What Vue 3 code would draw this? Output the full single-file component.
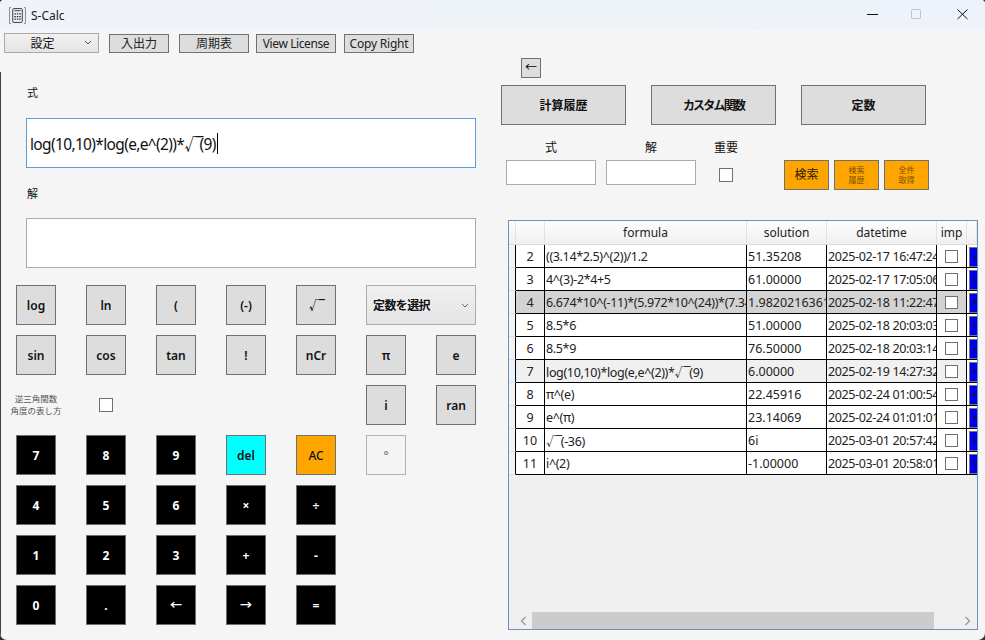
<script setup>
const keys = [
  { t: 'log' }, { t: 'ln' }, { t: '(' }, { t: '(-)' }, { t: '√¯', cls: 'rootkey' },
  { select: true },
  { t: 'sin', cls: 'c1' }, { t: 'cos' }, { t: 'tan' }, { t: '!' }, { t: 'nCr' }, { t: 'π' }, { t: 'e' },
  { note: true },
  { check: true },
  { t: 'i', cls: 'c6' }, { t: 'ran' },
  { t: '7', cls: 'c1 dark' }, { t: '8', cls: 'dark' }, { t: '9', cls: 'dark' }, { t: 'del', cls: 'cyan' }, { t: 'AC', cls: 'orange' }, { t: '°', cls: 'c6 off' },
  { t: '4', cls: 'c1 dark' }, { t: '5', cls: 'dark' }, { t: '6', cls: 'dark' }, { t: '×', cls: 'dark' }, { t: '÷', cls: 'dark' },
  { t: '1', cls: 'c1 dark' }, { t: '2', cls: 'dark' }, { t: '3', cls: 'dark' }, { t: '+', cls: 'dark' }, { t: '-', cls: 'dark' },
  { t: '0', cls: 'c1 dark' }, { t: '.', cls: 'dark' }, { t: '←', cls: 'dark' }, { t: '→', cls: 'dark' }, { t: '=', cls: 'dark' },
]
const rows = [
  { id: 2, f: '((3.14*2.5)^(2))/1.2', s: '51.35208', d: '2025-02-17 16:47:24' },
  { id: 3, f: '4^(3)-2*4+5', s: '61.00000', d: '2025-02-17 17:05:06' },
  { id: 4, f: '6.674*10^(-11)*(5.972*10^(24))*(7.348', s: '1.98202163610', d: '2025-02-18 11:22:47', cls: 'sel' },
  { id: 5, f: '8.5*6', s: '51.00000', d: '2025-02-18 20:03:03' },
  { id: 6, f: '8.5*9', s: '76.50000', d: '2025-02-18 20:03:14' },
  { id: 7, f: 'log(10,10)*log(e,e^(2))*√¯(9)', s: '6.00000', d: '2025-02-19 14:27:32', cls: 'cur' },
  { id: 8, f: 'π^(e)', s: '22.45916', d: '2025-02-24 01:00:54' },
  { id: 9, f: 'e^(π)', s: '23.14069', d: '2025-02-24 01:01:01' },
  { id: 10, f: '√¯(-36)', s: '6i', d: '2025-03-01 20:57:42' },
  { id: 11, f: 'i^(2)', s: '-1.00000', d: '2025-03-01 20:58:01' },
]
</script>

<template>
  <div class="window">
    <header class="titlebar">
      <svg class="appicon" viewBox="0 0 16 16" width="17" height="17" fill="none" stroke="#333" stroke-width=".9">
        <path d="M2 .5H.5v15H2M14 .5h1.5v15H14" stroke="#888" />
        <rect x="3.5" y="1.5" width="9" height="13" rx="1" />
        <path d="M5 3.5h6" />
        <path d="M5 6.5h1.5M7.3 6.5h1.5M9.6 6.5h1.5M5 9h1.5M7.3 9h1.5M9.6 9h1.5M5 11.5h1.5M7.3 11.5h1.5M9.6 11.5h1.5" stroke-width="1.2" />
      </svg>
      <span class="title">S-Calc</span>
      <div class="controls">
        <svg width="45" height="30" viewBox="0 0 45 30"><path d="M17 14.5h11" stroke="#111" /></svg>
        <svg width="45" height="30" viewBox="0 0 45 30"><rect x="16.5" y="9.5" width="9" height="9" rx="1" fill="none" stroke="#c4c4c4" /></svg>
        <svg width="45" height="30" viewBox="0 0 45 30"><path d="M17.5 9.5l10 9.5M27.5 9.5l-10 9.5" stroke="#111" /></svg>
      </div>
    </header>

    <nav class="menu">
      <div class="combo">
        <span>設定</span>
        <svg class="chev" width="8" height="5" viewBox="0 0 8 5"><path d="M1 1l3 3 3-3" fill="none" stroke="#555" /></svg>
      </div>
      <button class="mbtn w60">入出力</button>
      <button class="mbtn w70">周期表</button>
      <button class="mbtn w80">View License</button>
      <button class="mbtn w70b">Copy Right</button>
    </nav>

    <main class="main">
      <section class="left">
        <div class="field-label">式</div>
        <div class="textbox focus"><span>log(10,10)*log(e,e^(2))*<span class="root big">√¯</span>(9)</span><i class="caret"></i></div>
        <div class="field-label second">解</div>
        <div class="textbox"></div>

        <div class="pad">
          <template v-for="(k, n) in keys" :key="n">
            <div v-if="k.select" class="constsel">
              <span>定数を選択</span>
              <svg width="8" height="5" viewBox="0 0 8 5"><path d="M1 1l3 3 3-3" fill="none" stroke="#666" /></svg>
            </div>
            <div v-else-if="k.note" class="note">逆三角関数<br>角度の表し方</div>
            <div v-else-if="k.check" class="notecheck"><input type="checkbox" class="cb" /></div>
            <button v-else class="key" :class="k.cls">{{ k.t }}</button>
          </template>
        </div>
      </section>

      <section class="right">
        <button class="back">←</button>
        <div class="tabs">
          <button class="tab">計算履歴</button>
          <button class="tab kana">カスタム関数</button>
          <button class="tab">定数</button>
        </div>
        <div class="search">
          <label class="sf"><span>式</span><input class="sinput" /></label>
          <label class="sf"><span>解</span><input class="sinput" /></label>
          <label class="sf imp"><span>重要</span><input type="checkbox" class="cb" /></label>
          <div class="actions">
            <button class="act big">検索</button>
            <button class="act">検索<br>履歴</button>
            <button class="act">全件<br>取得</button>
          </div>
        </div>

        <div class="gridbox">
          <div class="tablewrap">
            <table class="tbl">
              <colgroup>
                <col class="c-strip" /><col class="c-id" /><col class="c-f" /><col class="c-s" /><col class="c-d" /><col class="c-i" /><col class="c-b" />
              </colgroup>
              <thead>
                <tr>
                  <th></th><th></th><th>formula</th><th>solution</th><th>datetime</th><th>imp</th><th></th>
                </tr>
              </thead>
              <tbody>
                <tr v-for="r in rows" :key="r.id" :class="r.cls">
                  <td class="strip"></td>
                  <td class="id">{{ r.id }}</td>
                  <td class="formula"><template v-for="(p, i) in r.f.split('√¯')" :key="i"><span v-if="i" class="root">√¯</span>{{ p }}</template></td>
                  <td>{{ r.s }}</td>
                  <td class="date">{{ r.d }}</td>
                  <td class="chk"><input type="checkbox" class="cb small" /></td>
                  <td class="blue">
                    <span class="bluebtn"><svg width="4" height="5" viewBox="0 0 4 5"><path d="M0 1l2 2.5L4 1" fill="none" stroke="#112" stroke-width="1.2" /></svg></span>
                  </td>
                </tr>
              </tbody>
            </table>
          </div>
          <div class="hscroll">
            <svg width="7" height="10" viewBox="0 0 7 10"><path d="M5.5 1L1.5 5l4 4" fill="none" stroke="#999" stroke-width="1.3" /></svg>
            <div class="thumb"></div>
            <svg width="7" height="10" viewBox="0 0 7 10"><path d="M1.5 1l4 4-4 4" fill="none" stroke="#999" stroke-width="1.3" /></svg>
          </div>
        </div>
      </section>
    </main>
  </div>
</template>

<style>
html, body { margin: 0; background: #333; }
</style>

<style scoped>
* { box-sizing: border-box; }
.window {
  width: 985px; height: 640px; overflow: hidden; background: #f5f5f5; color: #111; position: relative;
  border-radius: 4px 4px 7px 7px;
  font-family: "Noto Sans", "Noto Sans CJK JP", sans-serif; font-size: 12px;
  display: flex; flex-direction: column;
}
.window::before { content: ""; position: absolute; left: 0; top: 72px; bottom: 0; width: 1px; background: #444; }
button { font-family: inherit; padding: 0; margin: 0; cursor: default; }

.titlebar { height: 30px; flex: none; display: flex; align-items: center; padding-left: 9px; background: linear-gradient(90deg, #eff3f9, #eef3f8 70%, #eef2fb); }
.appicon { flex: none; }
.title { margin-left: 5px; font-size: 12px; color: #1a1a1a; }
.controls { margin-left: auto; display: flex; }
.controls svg { display: block; }

.menu { height: 24px; flex: none; display: flex; align-items: center; padding: 2px 0 0 4px; }
.combo { width: 95px; height: 20px; border: 1px solid #a9a9a9; background: linear-gradient(#f1f1f1, #e4e4e4); display: flex; align-items: center; justify-content: center; padding-right: 18px; font-size: 12px; position: relative; }
.chev { position: absolute; right: 6px; top: 6px; }
.mbtn { height: 19px; background: #dddddd; border: 1px solid #707070; font-size: 12px; line-height: 15px; color: #222; }
.w60 { width: 60px; margin-left: 10px; }
.w70 { width: 70px; margin-left: 10px; }
.w80 { width: 80px; margin-left: 7px; letter-spacing: -0.4px; }
.w70b { width: 70px; margin-left: 8px; letter-spacing: -0.2px; }

.main { flex: 1; display: flex; min-height: 0; }
.left { width: 501px; flex: none; padding: 29px 0 0 16px; }
.field-label { margin-left: 11px; height: 20px; line-height: 20px; font-size: 11px; }
.field-label.second { margin-top: 16px; }
.textbox { margin: 15px 0 0 10px; width: 450px; height: 50px; background: #fff; border: 1px solid #ababab; display: flex; align-items: center; padding-left: 3px; font-size: 15.5px; letter-spacing: -0.65px; }
.second + .textbox { margin-top: 14px; }
.textbox.focus { border-color: #5a9de0; }
.caret { width: 1px; height: 21px; background: #000; margin-left: 1px; }
.root { letter-spacing: -2.5px; margin-right: 1px; }
.root.big { letter-spacing: -4px; margin-right: 0; }

.pad { margin-top: 17px; display: grid; grid-template-columns: repeat(7, 40px); grid-auto-rows: 40px; column-gap: 30px; row-gap: 10px; }
.c1 { grid-column: 1; }
.c6 { grid-column: 6; }
.key { width: 40px; height: 40px; background: #dddddd; border: 1px solid #707070; font-size: 12px; font-weight: 600; color: #111; }
.key.rootkey { letter-spacing: -2px; }
.key.dark { background: #000; color: #fff; border-color: #6e6e6e; font-weight: 700; }
.key.cyan { background: #00ffff; }
.key.orange { background: #ffa500; font-weight: 500; }
.key.off { background: #f4f4f4; border-color: #adb2b5; color: #888; }
.constsel { grid-column: 6 / span 2; height: 40px; border: 1px solid #acacac; background: linear-gradient(#f0f0f0, #e5e5e5); display: flex; align-items: center; justify-content: space-between; padding: 0 6px 0 6px; font-size: 12px; font-weight: 700; letter-spacing: -0.6px; }
.note { grid-column: 1; margin-left: -6px; width: 52px; align-self: center; text-align: center; font-size: 8.5px; line-height: 12px; color: #555; white-space: nowrap; }
.notecheck { display: flex; align-items: center; justify-content: center; }

.cb { appearance: none; -webkit-appearance: none; margin: 0; width: 14px; height: 14px; background: #fff; border: 1px solid #707070; display: block; }
.cb.small { width: 13px; height: 13px; }

.right { flex: 1; padding: 4px 0 0 0; display: flex; flex-direction: column; align-items: flex-start; }
.back { margin-left: 20px; width: 20px; height: 20px; background: #dddddd; border: 1px solid #707070; font-size: 12px; line-height: 14px; }
.tabs { margin-top: 7px; display: flex; gap: 25px; }
.tab { width: 125px; height: 40px; background: #dddddd; border: 1px solid #707070; font-size: 12px; font-weight: 700; color: #111; }
.tab.kana { letter-spacing: -1.8px; }
.search { margin: 11px 0 0 5px; display: flex; align-items: flex-start; }
.sf { display: flex; flex-direction: column; align-items: center; width: 90px; margin-right: 10px; font-size: 12px; }
.sf span { height: 24px; line-height: 24px; }
.sinput { width: 90px; height: 25px; background: #fff; border: 1px solid #ababab; padding: 0; outline: 0; }
.sf.imp { width: 40px; margin: 0; }
.sf.imp .cb { margin-top: 8px; }
.actions { margin: 24px 0 0 38px; display: flex; gap: 5px; }
.act { width: 45px; height: 30px; background: #ffa500; border: 1px solid #707070; font-size: 8px; line-height: 10px; color: #7a5000; }
.act.big { font-size: 12px; color: #2a1a00; }

.gridbox { margin: 30px 0 0 7px; width: 470px; height: 410px; border: 1px solid #6f8fbd; background: #efefef; display: flex; flex-direction: column; }
.tablewrap { flex: 1; min-height: 0; overflow: hidden; }
.tbl { width: 468px; table-layout: fixed; border-collapse: separate; border-spacing: 0; font-size: 12px; }
.c-strip { width: 7px; }
.c-id { width: 29px; }
.c-f { width: 202px; }
.c-s { width: 80px; }
.c-d { width: 110px; }
.c-i { width: 30px; }
.c-b { width: 10px; }
th { height: 24px; padding: 0; font-weight: 400; font-size: 12px; color: #222; background: linear-gradient(#fdfdfd, #f0f0f0); border-right: 1px solid #e2e2e2; border-bottom: 1px solid #d9d9d9; }
td { height: 23px; padding: 0 0 0 1px; background: #fff; border-right: 1px solid #000; border-bottom: 1px solid #000; white-space: nowrap; overflow: hidden; font-size: 12.5px; color: #222; }
td.formula { letter-spacing: -0.35px; }
td.date { letter-spacing: -0.37px; }
td.strip { background: #f4f4f4; border-bottom: 1px solid #e0e0e0; padding: 0; }
td.id { text-align: center; padding: 0; }
td.chk { padding: 0 0 0 8px; }
td.blue { padding: 1px 0 0 2px; border-right: 0; }
.bluebtn { display: flex; align-items: center; justify-content: flex-end; width: 8px; height: 20px; background: #0000ee; border: 1px solid #777; border-right: 0; }
tr.sel td { background: #d3d3d3; }
tr.cur td { background: #f0f0f0; }
tr.sel td.blue, tr.cur td.blue { background: #fff; }
tr.sel td.strip { background: #f4f4f4; }
tr.cur td.strip { background: #e8f3fb; }

.hscroll { height: 17px; flex: none; display: flex; align-items: center; padding: 0 5px 0 11px; }
.thumb { width: 402px; height: 17px; background: #cccccc; margin: 0 30px 0 5px; }
</style>
